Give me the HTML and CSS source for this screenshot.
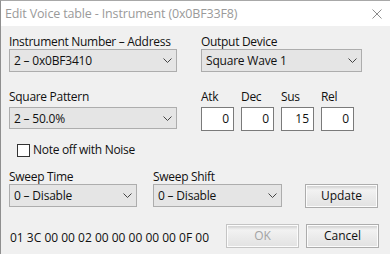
FILE: index.html
```html
<!DOCTYPE html>
<html>
<head>
<meta charset="utf-8">
<link rel="stylesheet" href="styles.css">
</head>
<body>
<div class="window">
  <div class="titlebar">
    <span class="title">Edit Voice table - Instrument (0x0BF33F8)</span>
    <svg class="close" width="10" height="10" viewBox="0 0 10 10"><path d="M0.5 0.5 L9.5 9.5 M9.5 0.5 L0.5 9.5" stroke="#8c8c8c" stroke-width="1" fill="none"/></svg>
  </div>
  <div class="content">
    <div class="row row1">
      <div class="field wide">
        <div class="label">Instrument Number – Address</div>
        <div class="combo"><span>2 – 0x0BF3410</span><svg class="chev" width="9" height="5" viewBox="0 0 9 5"><path d="M0.5 0.5 L4.5 4.5 L8.5 0.5" stroke="#444" fill="none"/></svg></div>
      </div>
      <div class="field output">
        <div class="label">Output Device</div>
        <div class="combo"><span>Square Wave 1</span><svg class="chev" width="9" height="5" viewBox="0 0 9 5"><path d="M0.5 0.5 L4.5 4.5 L8.5 0.5" stroke="#444" fill="none"/></svg></div>
      </div>
    </div>
    <div class="row row2">
      <div class="field wide">
        <div class="label">Square Pattern</div>
        <div class="combo short"><span>2 – 50.0%</span><svg class="chev" width="9" height="5" viewBox="0 0 9 5"><path d="M0.5 0.5 L4.5 4.5 L8.5 0.5" stroke="#444" fill="none"/></svg></div>
      </div>
      <div class="envs">
        <div class="env"><div class="label">Atk</div><div class="num">0</div></div>
        <div class="env"><div class="label">Dec</div><div class="num">0</div></div>
        <div class="env"><div class="label">Sus</div><div class="num">15</div></div>
        <div class="env"><div class="label">Rel</div><div class="num">0</div></div>
      </div>
    </div>
    <div class="check"><span class="box"></span><span class="label">Note off with Noise</span></div>
    <div class="row row3">
      <div class="field sweep">
        <div class="label">Sweep Time</div>
        <div class="combo"><span>0 – Disable</span><svg class="chev" width="9" height="5" viewBox="0 0 9 5"><path d="M0.5 0.5 L4.5 4.5 L8.5 0.5" stroke="#444" fill="none"/></svg></div>
      </div>
      <div class="field sweep2">
        <div class="label">Sweep Shift</div>
        <div class="combo"><span>0 – Disable</span><svg class="chev" width="9" height="5" viewBox="0 0 9 5"><path d="M0.5 0.5 L4.5 4.5 L8.5 0.5" stroke="#444" fill="none"/></svg></div>
      </div>
      <div class="btn update">Update</div>
    </div>
    <div class="row row4">
      <div class="hex">01 3C 00 00 02 00 00 00 00 00 0F 00</div>
      <div class="btn disabled">OK</div>
      <div class="btn cancel">Cancel</div>
    </div>
  </div>
</div>
</body>
</html>
```
FILE: styles.css
```css
html, body {
  margin: 0;
  padding: 0;
  background: #f0f0f0;
}
.window {
  width: 390px;
  height: 254px;
  box-sizing: border-box;
  border-left: 1px solid #8f8f8f;
  border-top: 1px solid #a8a8a8;
  background: #f0f0f0;
  font-family: "Open Sans", "Noto Sans", sans-serif;
  font-size: 12px;
  color: #111;
  overflow: hidden;
}
.titlebar {
  height: 25px;
  background: #fff;
  display: flex;
  align-items: center;
  padding-left: 4px;
}
.title {
  color: #9a9a9a;
  font-size: 12.5px;
  letter-spacing: -0.15px;
  flex: 1;
}
.close {
  margin-right: 8px;
}
.content {
  padding: 9px 0 0 8px;
}
.row {
  display: flex;
}
.label {
  height: 14px;
  line-height: 14px;
  white-space: nowrap;
  letter-spacing: -0.3px;
}
.combo {
  box-sizing: border-box;
  height: 23px;
  border: 1px solid #adadad;
  background: #e5e5e5;
  display: flex;
  align-items: center;
  justify-content: space-between;
  padding: 0 4px 0 4px;
  white-space: nowrap;
  letter-spacing: -0.2px;
}
.combo.short {
  height: 22px;
  margin-top: 3px;
}
.wide {
  width: 168px;
}
.output {
  margin-left: 24px;
  width: 161px;
}
.row2 {
  margin-top: 18px;
}
.envs {
  display: flex;
  gap: 7px;
  margin-left: 24px;
}
.env .num {
  box-sizing: border-box;
  width: 33px;
  height: 24px;
  margin-top: 3px;
  border: 1px solid #7a7a7a;
  background: #fff;
  text-align: right;
  padding-right: 4px;
  line-height: 22px;
}
.check {
  display: flex;
  align-items: center;
  margin-top: 12px;
  margin-left: 8px;
  height: 14px;
}
.check .box {
  box-sizing: border-box;
  width: 13px;
  height: 13px;
  border: 1px solid #333;
  background: #fff;
  margin-right: 3px;
}
.row3 {
  margin-top: 13px;
  align-items: flex-end;
}
.sweep {
  width: 128px;
}
.sweep2 {
  width: 129px;
  margin-left: 16px;
}
.btn {
  box-sizing: border-box;
  width: 73px;
  height: 24px;
  border: 1px solid #acacac;
  box-shadow: inset 0 0 0 1px #fcfcfc;
  background: linear-gradient(#d6d6d6 0, #d6d6d6 2px, #e4e4e4 3px, #f2f2f2 5px, #ebebeb 12px, #e2e2e2 100%);
  text-align: center;
  line-height: 22px;
}
.update {
  margin-left: 23px;
  margin-bottom: -1px;
}
.row4 {
  margin-top: 17px;
  align-items: center;
}
.hex {
  width: 216px;
  padding-left: 1px;
  padding-top: 2px;
}
.disabled {
  color: #a3a3a3;
  border-color: #c4c4c4;
}
.cancel {
  margin-left: 7px;
}
```
